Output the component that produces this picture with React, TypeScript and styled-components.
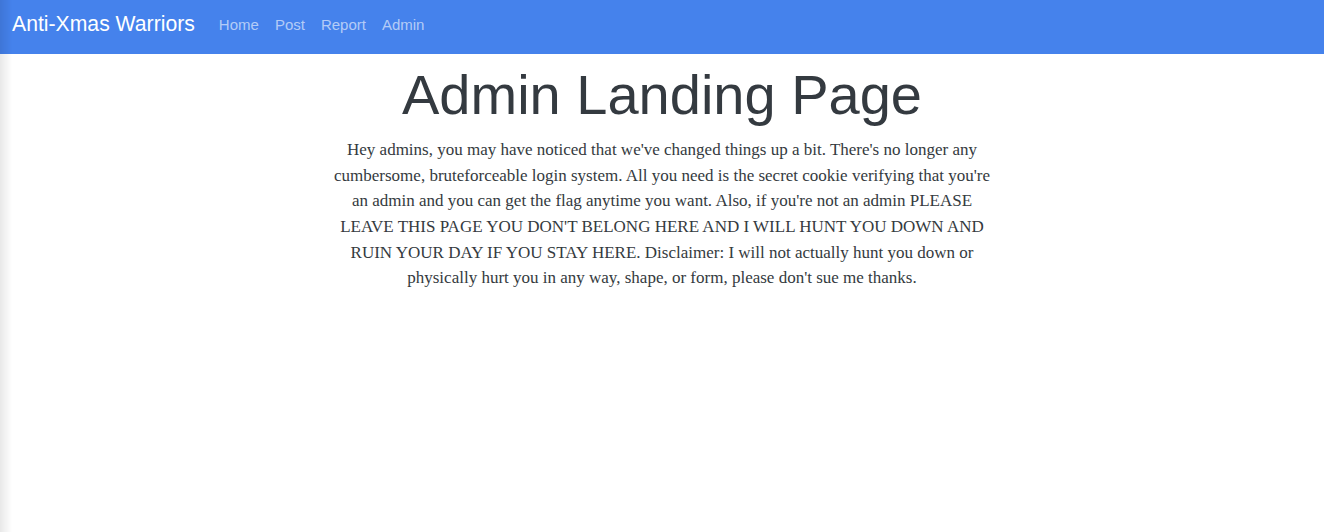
import React from 'react'
import styled, { createGlobalStyle } from 'styled-components'

const GlobalStyle = createGlobalStyle`
  html, body {
    margin: 0;
    padding: 0;
    background: #fff;
  }
  body {
    font-family: "Liberation Serif", "Times New Roman", serif;
    color: #343a40;
  }
  body::after {
    content: '';
    position: fixed;
    top: 0;
    left: 0;
    bottom: 0;
    width: 12px;
    pointer-events: none;
    background: linear-gradient(to right, rgba(0, 0, 0, 0.09), rgba(0, 0, 0, 0));
  }
`

const Navbar = styled.nav`
  display: flex;
  align-items: center;
  box-sizing: border-box;
  height: 54px;
  padding: 0 12px 6px;
  background: #4582ec;
  font-family: "Liberation Sans", Arial, sans-serif;
`

const Brand = styled.a`
  font-size: 21.2px;
  color: #fff;
  text-decoration: none;
  margin-right: 16px;
`

const NavLinks = styled.div`
  display: flex;
  align-items: center;
`

const NavLink = styled.a`
  font-size: 15px;
  color: rgba(255, 255, 255, 0.6);
  text-decoration: none;
  padding: 0 8px;
`

const Main = styled.main`
  display: flex;
  flex-direction: column;
  align-items: center;
  padding-top: 7px;
`

const Title = styled.h1`
  margin: 0;
  font-family: "Liberation Sans", Arial, sans-serif;
  font-size: 56px;
  font-weight: 400;
  line-height: 1.2;
  color: #343a40;
`

const Message = styled.p`
  margin: 9px 0 0;
  max-width: 662px;
  text-align: center;
  font-size: 17px;
  line-height: 25.6px;
  color: #343a40;
`

const links = ['Home', 'Post', 'Report', 'Admin']

const App: React.FC = () => {
  return (
    <>
      <GlobalStyle />
      <Navbar>
        <Brand href="#">Anti-Xmas Warriors</Brand>
        <NavLinks>
          {links.map((l) => (
            <NavLink key={l} href="#">
              {l}
            </NavLink>
          ))}
        </NavLinks>
      </Navbar>
      <Main>
        <Title>Admin Landing Page</Title>
        <Message>
          Hey admins, you may have noticed that we've changed things up a bit. There's no longer any
          cumbersome, bruteforceable login system. All you need is the secret cookie verifying that
          you're an admin and you can get the flag anytime you want. Also, if you're not an admin
          PLEASE LEAVE THIS PAGE YOU DON'T BELONG HERE AND I WILL HUNT YOU DOWN AND RUIN YOUR DAY IF
          YOU STAY HERE. Disclaimer: I will not actually hunt you down or physically hurt you in any
          way, shape, or form, please don't sue me thanks.
        </Message>
      </Main>
    </>
  )
}

export default App
